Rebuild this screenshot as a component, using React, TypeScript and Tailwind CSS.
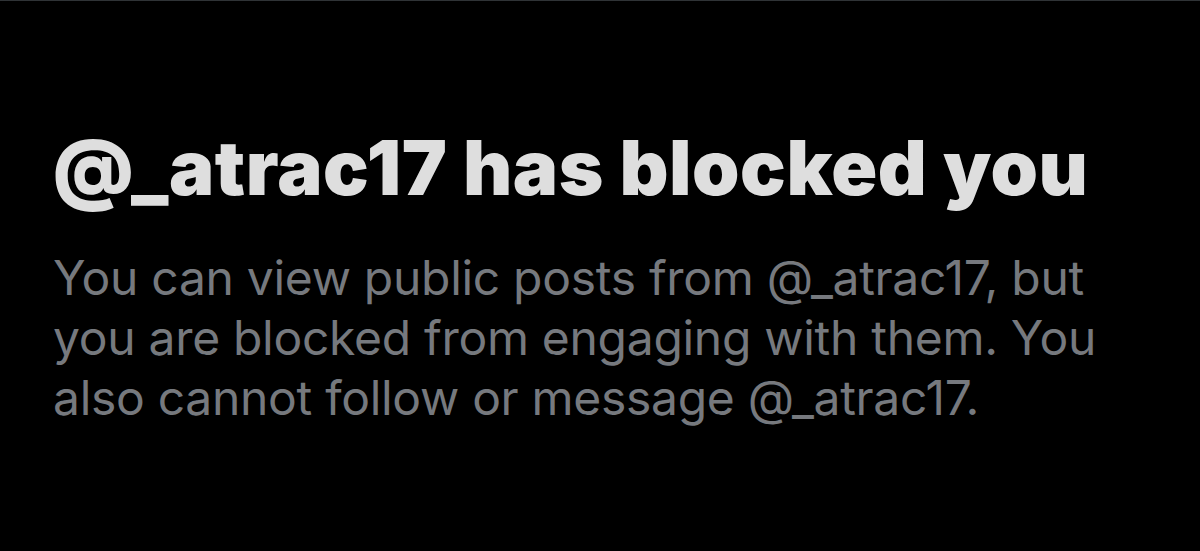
export default function App() {
  return (
    <div className="min-h-[551px] w-full bg-black border-t border-[#2f3336]">
      <div className="pl-[53px] pr-6 pt-[122px]" style={{ fontFamily: 'Inter, "Liberation Sans", sans-serif' }}>
        <h1 className="text-[76px] leading-[88px] font-black text-[#dedede] tracking-[0.5px] whitespace-nowrap">
          @_atrac17 has blocked you
        </h1>
        <p className="mt-[37px] max-w-[1090px] text-[48px] leading-[60px] text-[#76797e] tracking-[-0.3px]">
          You can view public posts from @_atrac17, but you are blocked from engaging with them. You also cannot follow or message @_atrac17.
        </p>
      </div>
    </div>
  );
}
